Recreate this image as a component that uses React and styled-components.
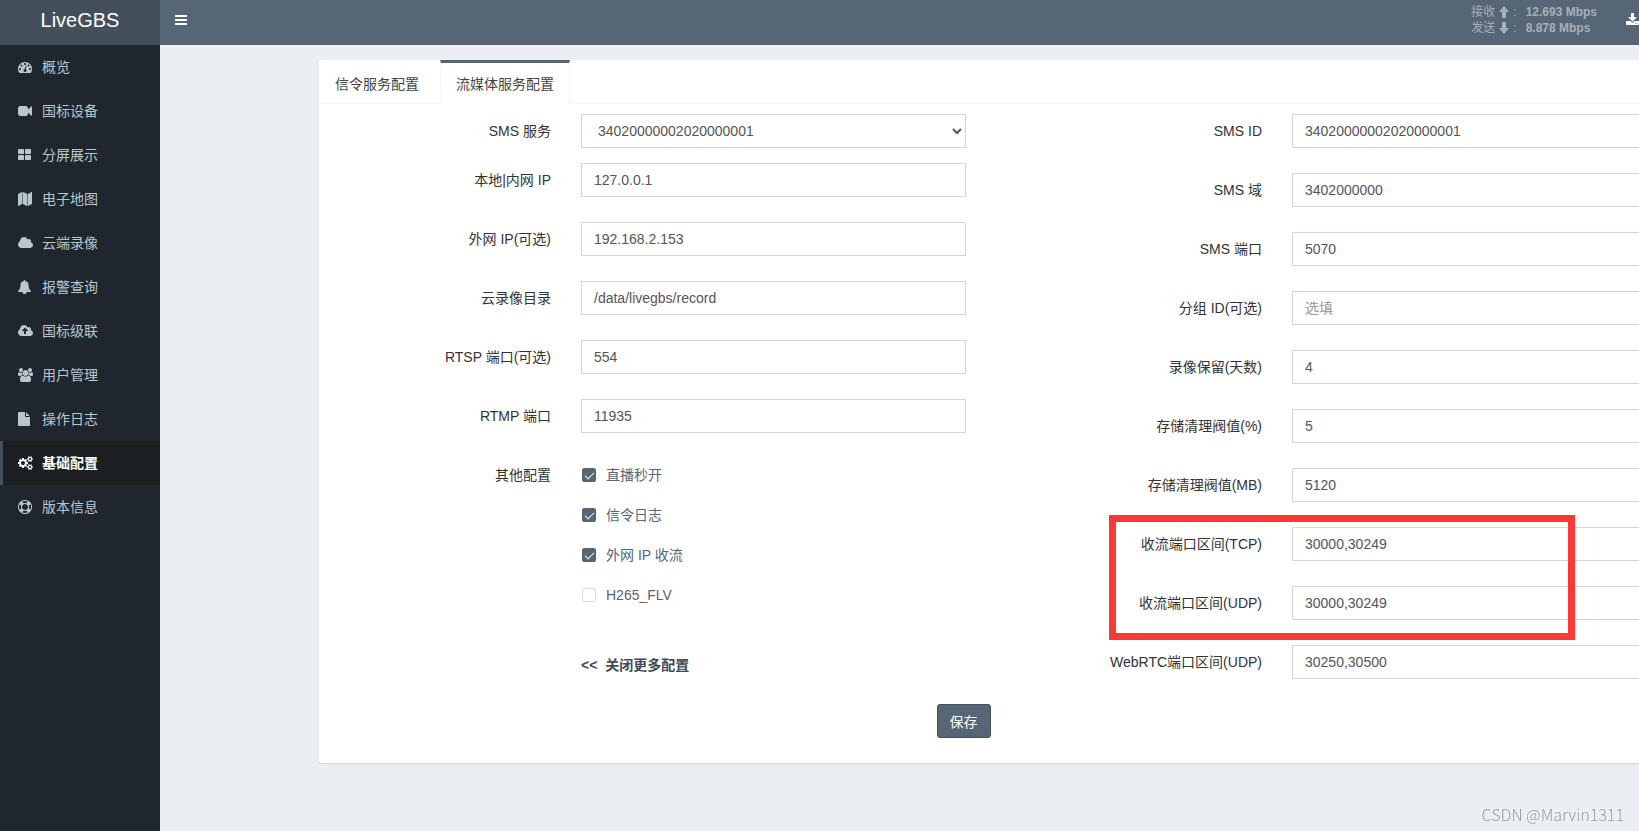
import { useState } from "react";
import styled, { createGlobalStyle } from "styled-components";

const GlobalStyle=createGlobalStyle`
    *{
        box-sizing:border-box;
    }
    body{
        margin:0;
        overflow-x:hidden;
        background-color:#ebeef3;
        color:#333;
        font-family:"Liberation Sans","Noto Sans CJK SC",sans-serif;
        font-size:14px;
        line-height:20px;
    }
    input,select,button{
        font-family:inherit;
        font-size:inherit;
    }
`
const Page=styled.div`
    display:flex;
    flex-direction:column;
    min-height:100vh;
`
const Header=styled.header`
    display:flex;
    height:45px;
    background-color:#566676;
    color:white;
`
const Logo=styled.a`
    width:160px;
    flex-shrink:0;
    background-color:#434f5a;
    color:white;
    font-size:20px;
    line-height:40px;
    text-align:center;
    text-decoration:none;
`
const Navbar=styled.nav`
    flex:1;
    display:flex;
    justify-content:space-between;
    min-width:0;
    padding-left:15px;
`
const MenuButton=styled.button`
    display:flex;
    align-items:center;
    height:40px;
    padding:0;
    border:none;
    background:none;
    color:white;
`
const NavRight=styled.div`
    display:flex;
`
const Stats=styled.div`
    display:flex;
    flex-direction:column;
    padding:4px 14px 0 0;
    color:#a7b0b9;
    font-size:12px;
    line-height:16px;
`
const Stat=styled.div`
    display:flex;
    align-items:center;
    gap:4px;
`
const StatValue=styled.b`
    padding-left:5px;
`
const DownloadLink=styled.a`
    display:flex;
    align-items:center;
    height:40px;
    padding-left:15px;
    color:white;
`
const Body=styled.div`
    flex:1;
    display:flex;
`
const Sidebar=styled.aside`
    width:160px;
    flex-shrink:0;
    background-color:#20262d;
`
const Menu=styled.ul`
    margin:0;
    padding:0;
    list-style:none;
`
const MenuLink=styled.a`
    display:flex;
    align-items:center;
    gap:4px;
    height:44px;
    padding-left:15px;
    border-left:3px solid ${props=>props.$active ? "#434f5a" : "transparent"};
    background-color:${props=>props.$active ? "#1b1f22" : "transparent"};
    color:${props=>props.$active ? "white" : "#b8c7ce"};
    font-weight:${props=>props.$active ? 600 : 400};
    text-decoration:none;
`
const MenuIcon=styled.span`
    display:flex;
    width:20px;
`
const Content=styled.main`
    flex:1;
    min-width:0;
    overflow:hidden;
    padding:15px 15px 0 159px;
`
const Panel=styled.section`
    min-width:1442px;
    border-radius:3px;
    background-color:white;
    box-shadow:0 1px 1px rgba(0,0,0,0.1);
`
const Tabs=styled.div`
    display:flex;
    gap:5px;
    height:44px;
    border-bottom:1px solid #f4f4f4;
`
const Tab=styled.button`
    height:44px;
    padding:0 15px;
    border:solid transparent;
    border-width:3px 1px 1px;
    border-color:${props=>props.$active ? "#566676 #f4f4f4 white" : "transparent transparent #f4f4f4"};
    background-color:${props=>props.$active ? "white" : "transparent"};
    color:#444;
    border-radius:0;
`
const Form=styled.form`
    padding:10px 10px 25px;
`
const Columns=styled.div`
    display:grid;
    grid-template-columns:1fr 1fr;
    align-items:start;
`
const Column=styled.div`
    display:flex;
    flex-direction:column;
    gap:25px;
`
const Group=styled.div`
    display:grid;
    grid-template-columns:4fr 7fr 1fr;
    margin-bottom:${props=>props.$tight ? "-10px" : "0"};
`
const Label=styled.label`
    padding-right:15px;
    line-height:34px;
    text-align:right;
`
const Field=styled.div`
    min-width:0;
    padding:0 15px;
`
const Input=styled.input`
    display:block;
    width:100%;
    height:34px;
    padding:6px 12px;
    border:1px solid #d2d6de;
    border-radius:0;
    background-color:white;
    color:#555;
    &::placeholder{
        color:#999;
    }
`
const Select=styled.select`
    display:block;
    width:100%;
    height:34px;
    padding:6px 0 6px 12px;
    border:1px solid #d2d6de;
    border-radius:0;
    background-color:white;
    color:#555;
`
const Highlight=styled.div`
    position:relative;
    display:flex;
    flex-direction:column;
    gap:25px;
    &::after{
        content:"";
        position:absolute;
        top:-12px;
        right:176px;
        bottom:-20px;
        left:69px;
        border:7px solid #fb3838;
        pointer-events:none;
    }
`
const Checks=styled.div`
    display:flex;
    flex-direction:column;
    align-items:flex-start;
    gap:6px;
    padding:0 16px;
`
const CheckLabel=styled.label`
    display:flex;
    align-items:center;
    gap:10px;
    height:34px;
    color:${props=>props.$checked ? "#566676" : "#606266"};
`
const CheckBox=styled.input`
    appearance:none;
    display:grid;
    place-items:center;
    width:14px;
    height:14px;
    margin:0;
    border:1px solid #dcdfe6;
    border-radius:2px;
    background-color:white;
    &:checked{
        border-color:#566676;
        background-color:#566676;
    }
    &:checked::after{
        content:"";
        width:4px;
        height:8px;
        border:solid white;
        border-width:0 1px 1px 0;
        transform:translateY(-1px) rotate(45deg);
    }
`
const MoreLink=styled.a`
    display:flex;
    gap:8px;
    margin-top:14px;
    color:#3f4a54;
    font-weight:600;
    line-height:28px;
    text-decoration:none;
`
const Actions=styled.div`
    display:grid;
    grid-template-columns:5fr 7fr;
    margin-top:25px;
`
const SaveButton=styled.button`
    grid-column:2;
    justify-self:start;
    height:34px;
    margin-left:15px;
    padding:0 12px;
    border:1px solid #434f5a;
    border-radius:3px;
    background-color:#566676;
    color:white;
`
const Watermark=styled.div`
    position:fixed;
    right:15px;
    bottom:5px;
    color:#97999d;
    font-family:"Noto Sans CJK SC",sans-serif;
    font-size:16px;
    font-weight:300;
    line-height:24px;
    text-shadow:-1px -1px 0 rgba(255,255,255,0.7);
`

const cloud="q0 159-112.5 271.5t-271.5 112.5h-1088q-185 0-316.5-131.5t-131.5-316.5q0-132 71-241.5t187-163.5q-2-28-2-43 0-212 150-362t362-150q158 0 286.5 88t187.5 230q70-62 166-62 106 0 181 75t75 181q0 75-41 138 129 30 213 134.5t84 239.5z"
const dot="q0-53-37.5-90.5t-90.5-37.5-90.5 37.5-37.5 90.5 37.5 90.5 90.5 37.5 90.5-37.5 37.5-90.5z"
const square="v384q0 52-38 90t-90 38h-512q-52 0-90-38t-38-90v-384q0-52 38-90t90-38h512q52 0 90 38t38 90z"
const bar="v128q0 26-19 45t-45 19h-1408q-26 0-45-19t-19-45v-128q0-26 19-45t45-19h1408q26 0 45 19t19 45z"
const hole="q0-52-38-90t-90-38-90 38-38 90q0 53 37.5 90.5t90.5 37.5 90.5-37.5 37.5-90.5z"
const smallCog="v140q0 16-149 31-12 27-30 52 51 113 51 138 0 4-4 7-122 71-124 71-8 0-46-47t-52-68q-20 2-30 2t-30-2q-14 21-52 68t-46 47q-2 0-124-71-4-3-4-7 0-25 51-138-18-25-30-52-149-15-149-31v-140q0-16 149-31 13-29 30-52-51-113-51-138 0-4 4-7 4-2 35-20t59-34 30-16q8 0 46 46.5t52 67.5q20-2 30-2t30 2q51-71 92-112l6-2q4 0 124 70 4 3 4 7 0 25-51 138 17 23 30 52 149 15 149 31z"

// [left edge, width, path], all 1792 units high
const icons={
    bars:[128,1536,`M1664 1344${bar}M1664 832${bar}M1664 320${bar}`],
    dashboard:[0,1792,`M384 1152${dot}M576 704${dot}M1004 1185l101-382q6-26-7.5-48.5t-38.5-29.5-48 6.5-30 39.5l-101 382q-60 5-107 43.5t-63 98.5q-20 77 20 146t117 89 146-20 89-117q16-60-6-117t-72-91zM1664 1152${dot}M1024 512${dot}M1472 704${dot}M1792 1152q0 261-141 483-19 29-54 29h-1402q-35 0-54-29-141-221-141-483 0-182 71-348t191-286 286-191 348-71 348 71 286 191 191 286 71 348z`],
    video:[0,1792,"M1792 352v1088q0 42-39 59-13 5-25 5-27 0-45-19l-403-403v166q0 119-84.5 203.5t-203.5 84.5h-704q-119 0-203.5-84.5t-84.5-203.5v-704q0-119 84.5-203.5t203.5-84.5h704q119 0 203.5 84.5t84.5 203.5v165l403-402q18-19 45-19 12 0 25 5 39 17 39 59z"],
    grid:[64,1664,`M832 1024${square}M832 256${square}M1728 1024${square}M1728 256${square}`],
    map:[0,1792,"M512 0q13 0 22.5 9.5t9.5 22.5v1472q0 20-17 28l-480 256q-7 4-15 4-13 0-22.5-9.5t-9.5-22.5v-1472q0-20 17-28l480-256q7-4 15-4zm1248 0q13 0 22.5 9.5t9.5 22.5v1472q0 20-17 28l-480 256q-7 4-15 4-13 0-22.5-9.5t-9.5-22.5v-1472q0-20 17-28l480-256q7-4 15-4zm-1120 0q8 0 14 3l512 256q18 10 18 29v1472q0 13-9.5 22.5t-22.5 9.5q-8 0-14-3l-512-256q-18-10-18-29v-1472q0-13 9.5-22.5t22.5-9.5z"],
    cloud:[64,1920,`M1984 1152${cloud}`],
    bell:[64,1664,"M1728 1408q0 52-38 90t-90 38h-448q0 106-75 181t-181 75-181-75-75-181h-448q-52 0-90-38t-38-90q50-42 91-88t85-119.5 74.5-158.5 50-206 19.5-260q0-152 117-282.5t307-158.5q-8-19-8-39 0-40 28-68t68-28 68 28 28 68q0 20-8 39 190 28 307 158.5t117 282.5q0 139 19.5 260t50 206 74.5 158.5 85 119.5 91 88z"],
    upload:[64,1920,`M1344 864q0-14-9-23l-352-352q-9-9-23-9t-23 9l-351 351q-10 12-10 24 0 14 9 23t23 9h224v352q0 13 9.5 22.5t22.5 9.5h192q13 0 22.5-9.5t9.5-22.5v-352h224q13 0 22.5-9.5t9.5-22.5zM1984 1152${cloud}`],
    users:[64,1920,"M657 896q-162 5-265 128h-134q-82 0-138-40.5t-56-118.5q0-353 124-353 6 0 43.5 21t97.5 42.5 119 21.5q67 0 133-23-5 37-5 66 0 139 81 256zm1071 637q0 120-73 189.5t-194 69.5h-874q-121 0-194-69.5t-73-189.5q0-53 3.5-103.5t14-109 26.5-108.5 43-97.5 62-81 85.5-53.5 111.5-20q10 0 43 21.5t73 48 107 48 135 21.5 135-21.5 107-48 73-48 43-21.5q61 0 111.5 20t85.5 53.5 62 81 43 97.5 26.5 108.5 14 109 3.5 103.5zm-1024-1277q0 106-75 181t-181 75-181-75-75-181 75-181 181-75 181 75 75 181zm704 384q0 159-112.5 271.5t-271.5 112.5-271.5-112.5-112.5-271.5 112.5-271.5 271.5-112.5 271.5 112.5 112.5 271.5zm576 225q0 78-56 118.5t-138 40.5h-134q-103-123-265-128 81-117 81-256 0-29-5-66 66 23 133 23 59 0 119-21.5t97.5-42.5 43.5-21q124 0 124 353zm-128-609q0 106-75 181t-181 75-181-75-75-181 75-181 181-75 181 75 75 181z"],
    file:[128,1536,"M1152 512v-472q22 14 36 28l408 408q14 14 28 36h-472zm-128 32q0 40 28 68t68 28h544v1056q0 40-28 68t-68 28h-1344q-40 0-68-28t-28-68v-1600q0-40 28-68t68-28h800v544z"],
    cogs:[0,1920,`M896 896q0-106-75-181t-181-75-181 75-75 181 75 181 181 75 181-75 75-181zM1664 1408${hole}M1664 384${hole}M1280 805v185q0 10-7 19.5t-16 10.5l-155 24q-11 35-32 76 34 48 90 115 7 11 7 20 0 12-7 19-23 30-82.5 89.5t-78.5 59.5q-11 0-21-7l-115-90q-37 19-77 31-11 108-23 155-7 24-30 24h-186q-11 0-20-7.5t-10-17.5l-23-153q-34-10-75-31l-118 89q-7 7-20 7-11 0-21-8-144-133-144-160 0-9 7-19 10-14 41-53t47-61q-23-44-35-82l-152-24q-10-1-17-9.5t-7-19.5v-185q0-10 7-19.5t16-10.5l155-24q11-35 32-76-34-48-90-115-7-11-7-20 0-12 7-20 22-30 82-89t79-59q11 0 21 7l115 90q34-18 77-32 11-108 23-154 7-24 30-24h186q11 0 20 7.5t10 17.5l23 153q34 10 75 31l118-89q8-7 20-7 11 0 21 8 144 133 144 160 0 8-7 19-12 16-42 54t-45 60q23 48 34 82l152 23q10 2 17 10.5t7 19.5zM1920 1338${smallCog}M1920 314${smallCog}`],
    ring:[0,1792,"M896 0q182 0 348 71t286 191 191 286 71 348-71 348-191 286-286 191-348 71-348-71-286-191-191-286-71-348 71-348 191-286 286-191 348-71zm0 128q-190 0-361 90l194 194q82-28 167-28t167 28l194-194q-171-90-361-90zm-678 1129l194-194q-28-82-28-167t28-167l-194-194q-90 171-90 361t90 361zm678 407q190 0 361-90l-194-194q-82 28-167 28t-167-28l-194 194q171 90 361 90zm0-384q159 0 271.5-112.5t112.5-271.5-112.5-271.5-271.5-112.5-271.5 112.5-112.5 271.5 112.5 271.5 271.5 112.5zm484-217l194 194q90-171 90-361t-90-361l-194 194q28 82 28 167t-28 167z"],
    download:[64,1664,"M1344 1344q0-26-19-45t-45-19-45 19-19 45 19 45 45 19 45-19 19-45zm256 0q0-26-19-45t-45-19-45 19-19 45 19 45 45 19 45-19 19-45zm128-224v320q0 40-28 68t-68 28h-1472q-40 0-68-28t-28-68v-320q0-40 28-68t68-28h465l135 136q58 56 136 56t136-56l136-136h464q40 0 68 28t28 68zm-325-569q17 41-14 70l-448 448q-18 19-45 19t-45-19l-448-448q-31-29-14-70 17-39 59-39h256v-448q0-26 19-45t45-19h256q26 0 45 19t19 45v448h256q42 0 59 39z"],
}

const Icon = ({name}) => {
    const [left,width,path]=icons[name];
    return (
        <svg width={width/128} height="14" viewBox={`${left} 0 ${width} 1792`} fill="currentColor" fillRule="evenodd" aria-hidden="true">
            <path d={path}/>
        </svg>
    )
}

const Arrow = ({down}) => (
    <svg width="10" height="12" viewBox="0 0 10 12" fill="currentColor" aria-hidden="true">
        <path d={down ? "M3 0h4v6h3l-5 6-5-6h3z" : "M5 0l5 6h-3v6h-4v-6h-3z"}/>
    </svg>
)

const menuItems=[
    {icon:"dashboard",text:"概览"},
    {icon:"video",text:"国标设备"},
    {icon:"grid",text:"分屏展示"},
    {icon:"map",text:"电子地图"},
    {icon:"cloud",text:"云端录像"},
    {icon:"bell",text:"报警查询"},
    {icon:"upload",text:"国标级联"},
    {icon:"users",text:"用户管理"},
    {icon:"file",text:"操作日志"},
    {icon:"cogs",text:"基础配置",active:true},
    {icon:"ring",text:"版本信息"},
]

const leftFields=[
    {id:"lan",label:"本地|内网 IP",value:"127.0.0.1"},
    {id:"wan",label:"外网 IP(可选)",value:"192.168.2.153"},
    {id:"record",label:"云录像目录",value:"/data/livegbs/record"},
    {id:"rtsp",label:"RTSP 端口(可选)",value:"554"},
    {id:"rtmp",label:"RTMP 端口",value:"11935"},
]

const rightFields=[
    {id:"smsid",label:"SMS ID",value:"34020000002020000001"},
    {id:"realm",label:"SMS 域",value:"3402000000"},
    {id:"port",label:"SMS 端口",value:"5070"},
    {id:"group",label:"分组 ID(可选)",value:"",placeholder:"选填"},
    {id:"days",label:"录像保留(天数)",value:"4"},
    {id:"percent",label:"存储清理阀值(%)",value:"5"},
    {id:"mb",label:"存储清理阀值(MB)",value:"5120"},
]

const portFields=[
    {id:"tcp",label:"收流端口区间(TCP)",value:"30000,30249"},
    {id:"udp",label:"收流端口区间(UDP)",value:"30000,30249"},
]

const TextField = ({id,label,value,placeholder}) => (
    <Group>
        <Label htmlFor={id}>{label}</Label>
        <Field>
            <Input id={id} type="text" defaultValue={value} placeholder={placeholder}/>
        </Field>
    </Group>
)

const Check = ({text,initial}) => {
    const [checked,setChecked]=useState(initial);
    return (
        <CheckLabel $checked={checked}>
            <CheckBox type="checkbox" checked={checked} onChange={e=>setChecked(e.target.checked)}/>
            {text}
        </CheckLabel>
    )
}

const App = () => {
    return (
        <Page>
            <GlobalStyle/>
            <Header>
                <Logo href="#">LiveGBS</Logo>
                <Navbar>
                    <MenuButton type="button" aria-label="菜单"><Icon name="bars"/></MenuButton>
                    <NavRight>
                        <Stats>
                            <Stat>接收<Arrow/><span>:</span><StatValue>12.693 Mbps</StatValue></Stat>
                            <Stat>发送<Arrow down/><span>:</span><StatValue>8.878 Mbps</StatValue></Stat>
                        </Stats>
                        <DownloadLink href="#" aria-label="下载"><Icon name="download"/></DownloadLink>
                    </NavRight>
                </Navbar>
            </Header>
            <Body>
                <Sidebar>
                    <Menu>
                        {menuItems.map(item=>(
                            <li key={item.text}>
                                <MenuLink href="#" $active={item.active}>
                                    <MenuIcon><Icon name={item.icon}/></MenuIcon>
                                    {item.text}
                                </MenuLink>
                            </li>
                        ))}
                    </Menu>
                </Sidebar>
                <Content>
                    <Panel>
                        <Tabs>
                            <Tab type="button">信令服务配置</Tab>
                            <Tab type="button" $active>流媒体服务配置</Tab>
                        </Tabs>
                        <Form onSubmit={e=>e.preventDefault()}>
                            <Columns>
                                <Column>
                                    <Group $tight>
                                        <Label htmlFor="sms">SMS 服务</Label>
                                        <Field>
                                            <Select id="sms">
                                                <option>34020000002020000001</option>
                                            </Select>
                                        </Field>
                                    </Group>
                                    {leftFields.map(field=><TextField key={field.id} {...field}/>)}
                                    <Group>
                                        <Label as="span">其他配置</Label>
                                        <Checks>
                                            <Check text="直播秒开" initial={true}/>
                                            <Check text="信令日志" initial={true}/>
                                            <Check text="外网 IP 收流" initial={true}/>
                                            <Check text="H265_FLV" initial={false}/>
                                        </Checks>
                                    </Group>
                                    <Group>
                                        <span/>
                                        <Field>
                                            <MoreLink href="#"><span>&lt;&lt;</span>关闭更多配置</MoreLink>
                                        </Field>
                                    </Group>
                                </Column>
                                <Column>
                                    {rightFields.map(field=><TextField key={field.id} {...field}/>)}
                                    <Highlight>
                                        {portFields.map(field=><TextField key={field.id} {...field}/>)}
                                    </Highlight>
                                    <TextField id="webrtc" label="WebRTC端口区间(UDP)" value="30250,30500"/>
                                </Column>
                            </Columns>
                            <Actions>
                                <SaveButton type="submit">保存</SaveButton>
                            </Actions>
                        </Form>
                    </Panel>
                </Content>
            </Body>
            <Watermark>CSDN @Marvin1311</Watermark>
        </Page>
    )
}

export default App
